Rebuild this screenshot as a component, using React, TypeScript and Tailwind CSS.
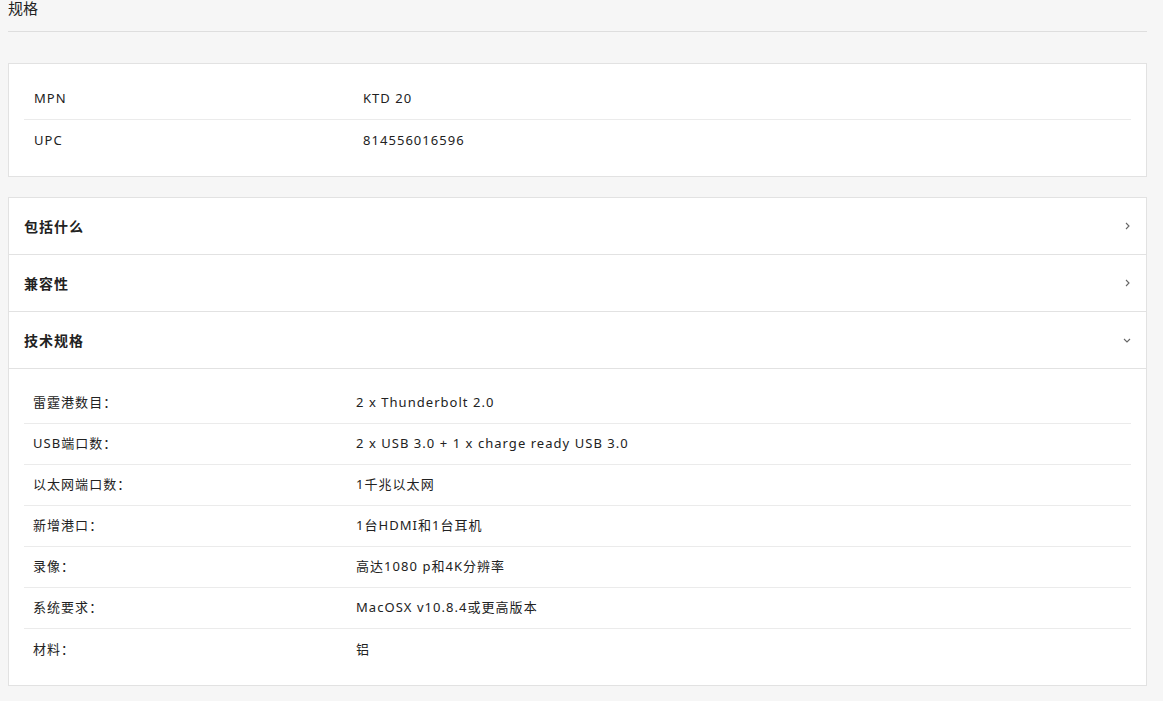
const specs: [string, string][] = [
  ["雷霆港数目：", "2 x Thunderbolt 2.0"],
  ["USB端口数：", "2 x USB 3.0 + 1 x charge ready USB 3.0"],
  ["以太网端口数：", "1千兆以太网"],
  ["新增港口：", "1台HDMI和1台耳机"],
  ["录像：", "高达1080 p和4K分辨率"],
  ["系统要求：", "MacOSX v10.8.4或更高版本"],
  ["材料：", "铝"],
];

const Chevron = ({ down }: { down?: boolean }) => (
  <svg width="10" height="10" viewBox="0 0 10 10" className="text-[#666]">
    <path d={down ? "M2 4 L5 7 L8 4" : "M4 2 L7 5 L4 8"} fill="none" stroke="currentColor" strokeWidth="1.1" />
  </svg>
);

export default function App() {
  return (
    <div
      className="min-h-[701px] bg-[#f6f6f6] pl-2 pr-4 pt-[2px] text-[#222] text-[13px] tracking-[0.08em]"
      style={{ fontFamily: '"Noto Sans", "Noto Sans CJK SC", sans-serif' }}
    >
      <div className="h-[30px] border-b border-[#dedede] text-[15px] leading-[12px] tracking-normal">规格</div>
      <div className="mt-[31px] bg-white border border-[#e2e2e2] px-[15px] py-[15px]">
        {[["MPN", "KTD 20"], ["UPC", "814556016596"]].map(([k, v], i) => (
          <div key={k} className={`flex h-[41px] items-center ${i === 0 ? "border-b border-[#ebebeb]" : ""}`}>
            <div className="w-[339px] pl-[10px]">{k}</div>
            <div>{v}</div>
          </div>
        ))}
      </div>
      <div className="mt-[20px] bg-white border border-[#e2e2e2]">
        {["包括什么", "兼容性", "技术规格"].map((t, i) => (
          <div key={t} className="flex h-[57px] items-center justify-between border-b border-[#e2e2e2] pl-[15px] pr-[14px]">
            <span className="font-bold text-[14px]">{t}</span>
            <Chevron down={i === 2} />
          </div>
        ))}
        <div className="px-[15px] pt-[14px] pb-[15px]">
          {specs.map(([k, v], i) => (
            <div key={k} className={`flex h-[41px] items-center ${i < specs.length - 1 ? "border-b border-[#ebebeb]" : ""}`}>
              <div className="w-[332px] pl-[9px]">{k}</div>
              <div>{v}</div>
            </div>
          ))}
        </div>
      </div>
    </div>
  );
}
